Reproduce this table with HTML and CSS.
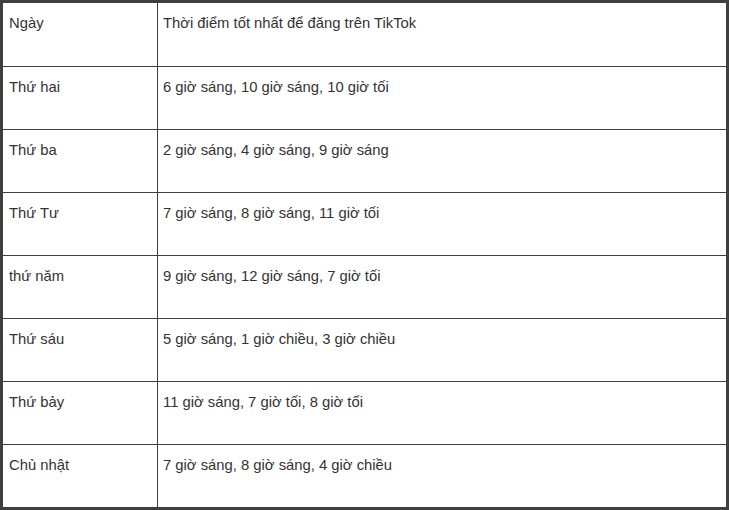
FILE: index.html
```html
<!DOCTYPE html>
<html lang="vi">
<head>
<meta charset="utf-8">
<title>Thời điểm tốt nhất để đăng trên TikTok</title>
<link rel="stylesheet" href="styles.css">
</head>
<body>
<table class="schedule">
  <tbody>
    <tr class="first"><td class="day">Ngày</td><td class="times">Thời điểm tốt nhất để đăng trên TikTok</td></tr>
    <tr><td class="day">Thứ hai</td><td class="times">6 giờ sáng, 10 giờ sáng, 10 giờ tối</td></tr>
    <tr><td class="day">Thứ ba</td><td class="times">2 giờ sáng, 4 giờ sáng, 9 giờ sáng</td></tr>
    <tr><td class="day">Thứ Tư</td><td class="times">7 giờ sáng, 8 giờ sáng, 11 giờ tối</td></tr>
    <tr><td class="day">thứ năm</td><td class="times">9 giờ sáng, 12 giờ sáng, 7 giờ tối</td></tr>
    <tr><td class="day">Thứ sáu</td><td class="times">5 giờ sáng, 1 giờ chiều, 3 giờ chiều</td></tr>
    <tr><td class="day">Thứ bảy</td><td class="times">11 giờ sáng, 7 giờ tối, 8 giờ tối</td></tr>
    <tr class="last"><td class="day">Chủ nhật</td><td class="times">7 giờ sáng, 8 giờ sáng, 4 giờ chiều</td></tr>
  </tbody>
</table>
</body>
</html>
```

FILE: styles.css
```css
html, body {
  margin: 0;
  padding: 0;
  background: #ffffff;
}

.schedule {
  border-collapse: separate;
  border-spacing: 0;
  border: 3px solid #3f3f3f;
  width: 729px;
  height: 510px;
  table-layout: fixed;
  font-family: "Liberation Sans", Arial, sans-serif;
  font-size: 14.8px;
  line-height: 21px;
  color: #333333;
}

.schedule td {
  box-sizing: border-box;
  vertical-align: top;
  padding: 10px 6px;
  border-bottom: 1px solid #3f3f3f;
  height: 63px;
}

.schedule tr.first td {
  height: 64px;
}

.schedule tr.last td {
  border-bottom: none;
  height: 62px;
}

.schedule td.day {
  width: 155px;
  border-right: 1px solid #3f3f3f;
}

.schedule td.times {
  width: 568px;
  padding-left: 5px;
}
```
